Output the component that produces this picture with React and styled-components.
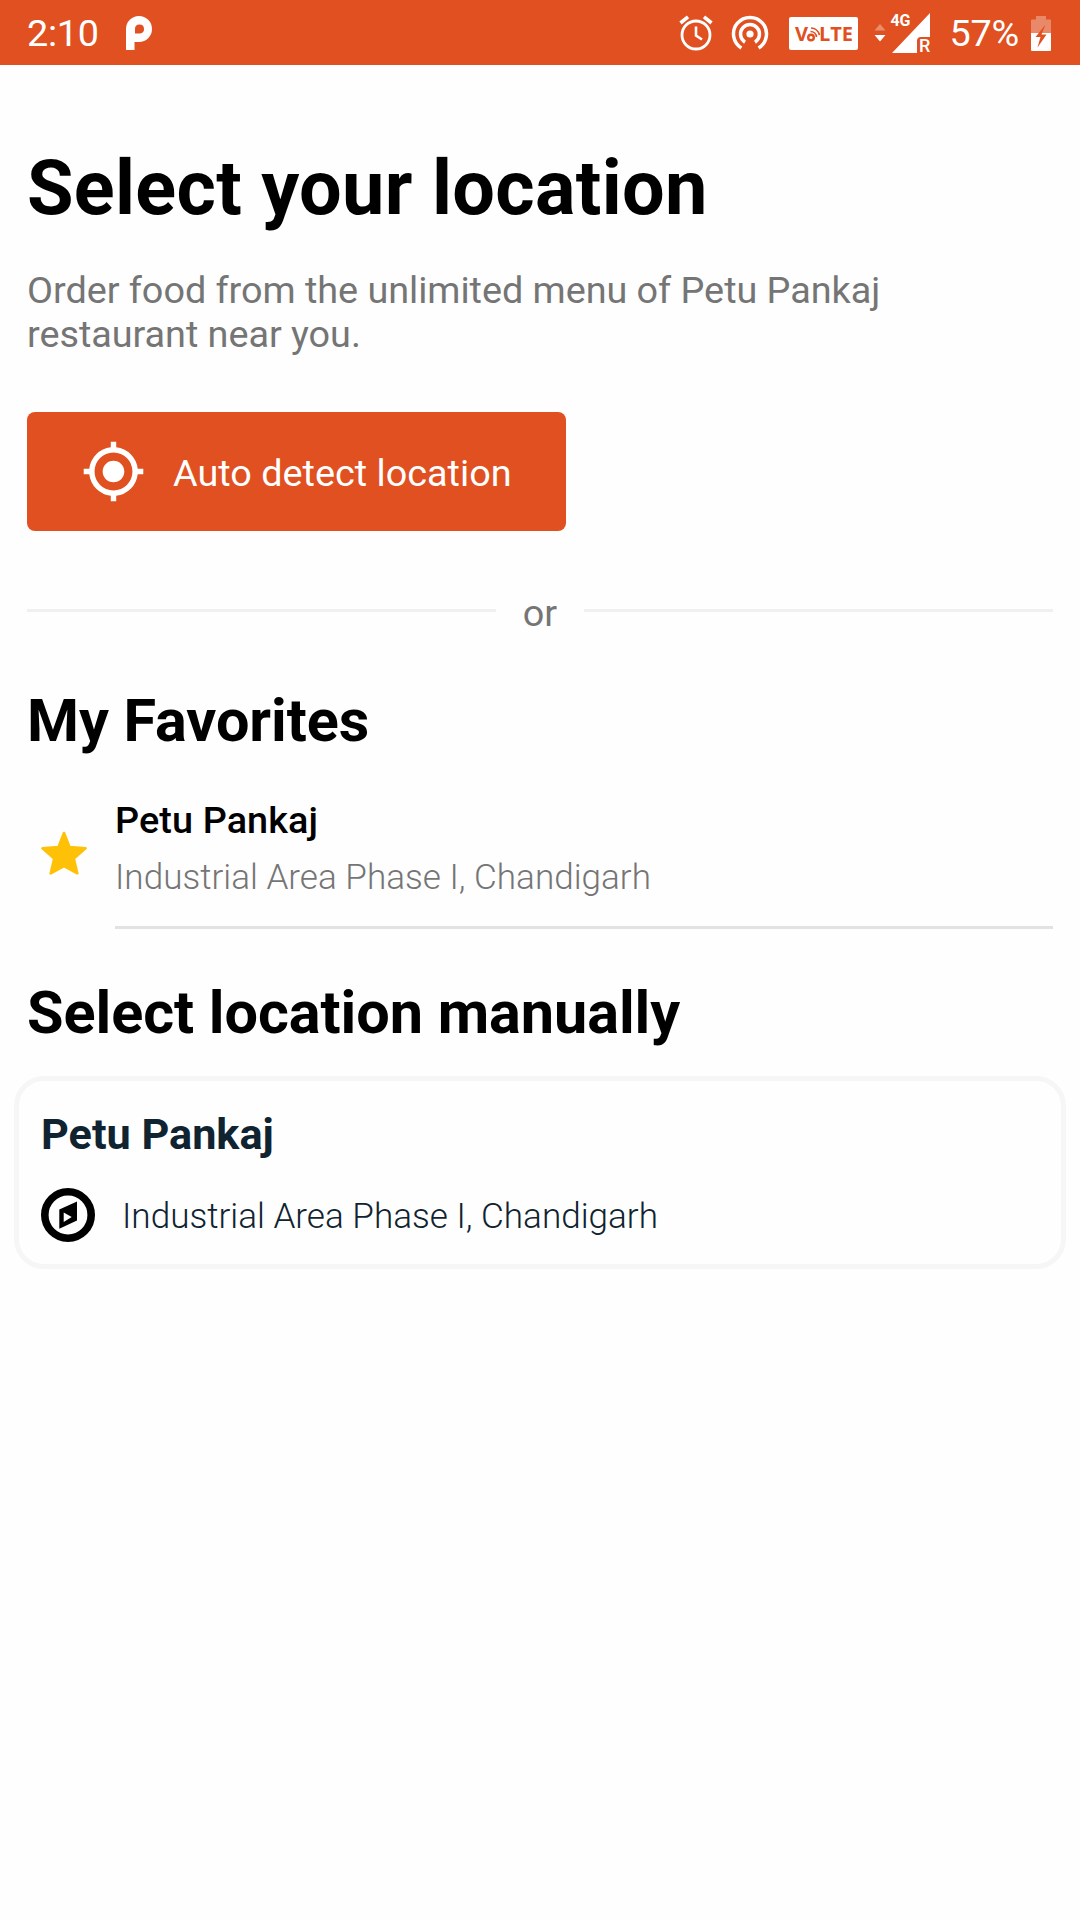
import styled, { createGlobalStyle } from 'styled-components'
import { MdMyLocation } from 'react-icons/md'

const favorites = [
  { id: 1, name: "Petu Pankaj", address: "Industrial Area Phase I, Chandigarh" },
]

const locations = [
  { id: 1, name: "Petu Pankaj", address: "Industrial Area Phase I, Chandigarh" },
]

const NotificationIcon = () => (
  <svg width="28" height="34" viewBox="0 0 28 34">
    <path
      fill="#fff"
      fillRule="evenodd"
      d="M1 34V13a13 13 0 1 1 13 13H9.500V34ZM10 17.500h5a4.500 4.500 0 1 0-5-4.500Z"
    />
  </svg>
)

const AlarmIcon = () => (
  <svg width="34" height="36" viewBox="0 0 34 36" fill="none" stroke="#fff">
    <circle cx="17" cy="20" r="14" strokeWidth="2.800" />
    <path d="M17 11.500V20.500L23 24.500" strokeWidth="2.600" />
    <path d="M1.500 8L9 1.800M32.500 8L25 1.800" strokeWidth="3.600" />
  </svg>
)

const HotspotIcon = () => (
  <svg width="38" height="36" viewBox="0 0 38 36" fill="none" stroke="#fff" strokeWidth="3.500">
    <circle cx="19" cy="19" r="3.600" fill="#fff" stroke="none" />
    <path d="M14 27.200A9.500 9.500 0 1 1 24 27.200" />
    <path d="M10.400 33A16.500 16.500 0 1 1 27.600 33" />
  </svg>
)

const MiniWaves = () => (
  <svg width="13" height="18" viewBox="0 0 13 18" fill="none" stroke="#e05020">
    <circle cx="4" cy="12.500" r="2.800" strokeWidth="2.400" />
    <path d="M3.500 6.500A6 6 0 0 1 9.500 12" strokeWidth="1.700" />
    <path d="M4 3A9 9 0 0 1 12.500 10" strokeWidth="1.700" />
  </svg>
)

const DataArrows = () => (
  <svg width="12" height="18" viewBox="0 0 12 18">
    <path d="M6 0l5.500 6.500h-11z" fill="#fff" opacity=".35" />
    <path d="M6 17.500L11.500 11h-11z" fill="#fff" />
  </svg>
)

const SignalIcon = () => (
  <svg width="38" height="40" viewBox="0 0 38 40">
    <path d="M38 0V24H29Q25 24 25 28V40H0Z" fill="#fff" />
  </svg>
)

const BatteryIcon = () => (
  <svg width="20" height="35" viewBox="0 0 20 35">
    <path d="M5 0h10v3.500h4q1 0 1 1V17H0V4.500q0-1 1-1h4z" fill="#fff" opacity=".33" />
    <path d="M0 17h20v17q0 1-1 1H1q-1 0-1-1z" fill="#fff" />
    <path d="M14.500 8.500L4.500 21H9.500L6.500 31.500L15.500 18.500H10.500Z" fill="#e05020" />
  </svg>
)

const StarIcon = () => (
  <svg width="46" height="44" viewBox="0 0 46 44">
    <path
      d="M23 2L28.500 16L44.500 17.300L32.800 27.500L36.300 42.300L23 35L9.700 42.300L13.200 27.500L1.500 17.300L17.500 16Z"
      fill="#ffc107"
      stroke="#ffc107"
      strokeWidth="2.600"
      strokeLinejoin="round"
    />
  </svg>
)

const CompassIcon = () => (
  <svg width="54" height="54" viewBox="0 0 54 54">
    <circle cx="27" cy="27" r="23.200" fill="none" stroke="#000" strokeWidth="7.600" />
    <path fillRule="evenodd" d="M36 13.500V32.500L18.300 40.800V21.500ZM22.700 24.500V34L30.700 29Z" fill="#000" />
  </svg>
)

const App = () => {
  return (
    <>
      <GlobalStyle />
      <StatusBar>
        <Time>2:10</Time>
        <NotificationIcon />
        <StatusIcons>
          <AlarmIcon />
          <HotspotIcon />
          <Volte>V<MiniWaves />LTE</Volte>
          <DataArrows />
          <Signal>
            <SignalIcon />
            <Network>4G</Network>
            <Roaming>R</Roaming>
          </Signal>
          <Percent>57%</Percent>
          <BatteryIcon />
        </StatusIcons>
      </StatusBar>
      <Page>
        <Title>Select your location</Title>
        <Description>
          Order food from the unlimited menu of Petu Pankaj restaurant near you.
        </Description>
        <DetectButton>
          <MdMyLocation size={65} />
          <span>Auto detect location</span>
        </DetectButton>
        <Separator>
          <span>or</span>
        </Separator>
        <Heading>My Favorites</Heading>
        {favorites.map((item) => (
          <Favorite key={item.id}>
            <StarIcon />
            <FavoriteInfo>
              <h3>{item.name}</h3>
              <Address>{item.address}</Address>
            </FavoriteInfo>
          </Favorite>
        ))}
        <Heading $tight>Select location manually</Heading>
        {locations.map((item) => (
          <Card key={item.id}>
            <h3>{item.name}</h3>
            <CardRow>
              <CompassIcon />
              <Address $dark>{item.address}</Address>
            </CardRow>
          </Card>
        ))}
      </Page>
    </>
  )
}

const GlobalStyle = createGlobalStyle`
  *{
    box-sizing:border-box;
    margin:0;
    padding:0;
  }
  body{
    background:#fefefe;
    font-family:Roboto, sans-serif;
    color:#000;
  }
  svg{
    display:block;
    flex-shrink:0;
  }
`

const StatusBar = styled.header`
  display:flex;
  align-items:center;
  height:65px;
  padding:1px 29px 0 27px;
  background:#e05020;
  color:#fff;
`

const Time = styled.span`
  width:98px;
  font-size:37.800px;
  line-height:44px;
  letter-spacing:-.3px;
`

const StatusIcons = styled.div`
  display:flex;
  align-items:center;
  margin-left:auto;
  & > svg:first-child{
    margin-right:18px;
  }
`

const Volte = styled.div`
  display:flex;
  align-items:center;
  justify-content:center;
  width:69px;
  height:33px;
  margin:1px 16px 0 20px;
  border-radius:2px;
  background:#fff;
  color:#e05020;
  font:bold 20px/33px "Open Sans", sans-serif;
  svg{
    margin:0 -1px;
  }
`

const Signal = styled.div`
  position:relative;
  margin:0 19px 0 6px;
`

const Network = styled.span`
  position:absolute;
  top:0;
  left:-2px;
  font-size:16px;
  line-height:16px;
  font-weight:700;
`

const Roaming = styled.span`
  position:absolute;
  right:0;
  bottom:-1px;
  font-size:18px;
  line-height:16px;
  font-weight:500;
`

const Percent = styled.span`
  margin-right:12px;
  font-size:37.800px;
  line-height:44px;
  letter-spacing:-.2px;
`

const Page = styled.main`
  padding:79px 27px 0;
`

const Title = styled.h1`
  font-size:75.600px;
  line-height:88px;
  font-weight:700;
  letter-spacing:.33px;
`

const Description = styled.p`
  width:900px;
  margin-top:36px;
  font-size:37.800px;
  line-height:44px;
  letter-spacing:-.04px;
  color:#757575;
`

const DetectButton = styled.button`
  display:flex;
  align-items:center;
  gap:27px;
  width:539px;
  height:119px;
  margin-top:56px;
  padding-left:54px;
  border:0;
  border-radius:8px;
  background:#e05020;
  color:#fff;
  font:400 37.800px/44px Roboto, sans-serif;
  span{
    padding-top:2px;
  }
`

const Separator = styled.div`
  display:flex;
  align-items:center;
  gap:27px;
  height:44px;
  margin-top:60px;
  font-size:37.800px;
  line-height:44px;
  color:#757575;
  &::before, &::after{
    content:"";
    flex:1;
    height:3px;
    margin-bottom:5px;
    background:#f0f0f0;
  }
`

const Heading = styled.h2`
  margin-top:${(props) => (props.$tight ? "49px" : "51px")};
  font-size:59.400px;
  line-height:70px;
  font-weight:700;
  letter-spacing:-.06px;
`

const Favorite = styled.div`
  display:flex;
  gap:28px;
  margin-top:42px;
  padding-left:14px;
  & > svg{
    margin-top:33px;
  }
`

const FavoriteInfo = styled.div`
  flex:1;
  padding-bottom:28px;
  border-bottom:3px solid #e2e2e2;
  h3{
    margin-bottom:15px;
    font-size:37.800px;
    line-height:44px;
    font-weight:500;
    letter-spacing:.1px;
  }
`

const Address = styled.p`
  padding-top:${(props) => (props.$dark ? "2px" : "0")};
  font-size:35.100px;
  line-height:41px;
  font-weight:300;
  color:${(props) => (props.$dark ? "#0f2330" : "#757575")};
`

const Card = styled.section`
  margin:28px -13px 0;
  padding:28px 22px 22px;
  border:5px solid #f6f6f6;
  border-radius:30px;
  h3{
    font-size:43.200px;
    line-height:51px;
    font-weight:700;
    color:#0f2330;
  }
`

const CardRow = styled.div`
  display:flex;
  align-items:center;
  gap:27px;
  margin-top:28px;
`

export default App
